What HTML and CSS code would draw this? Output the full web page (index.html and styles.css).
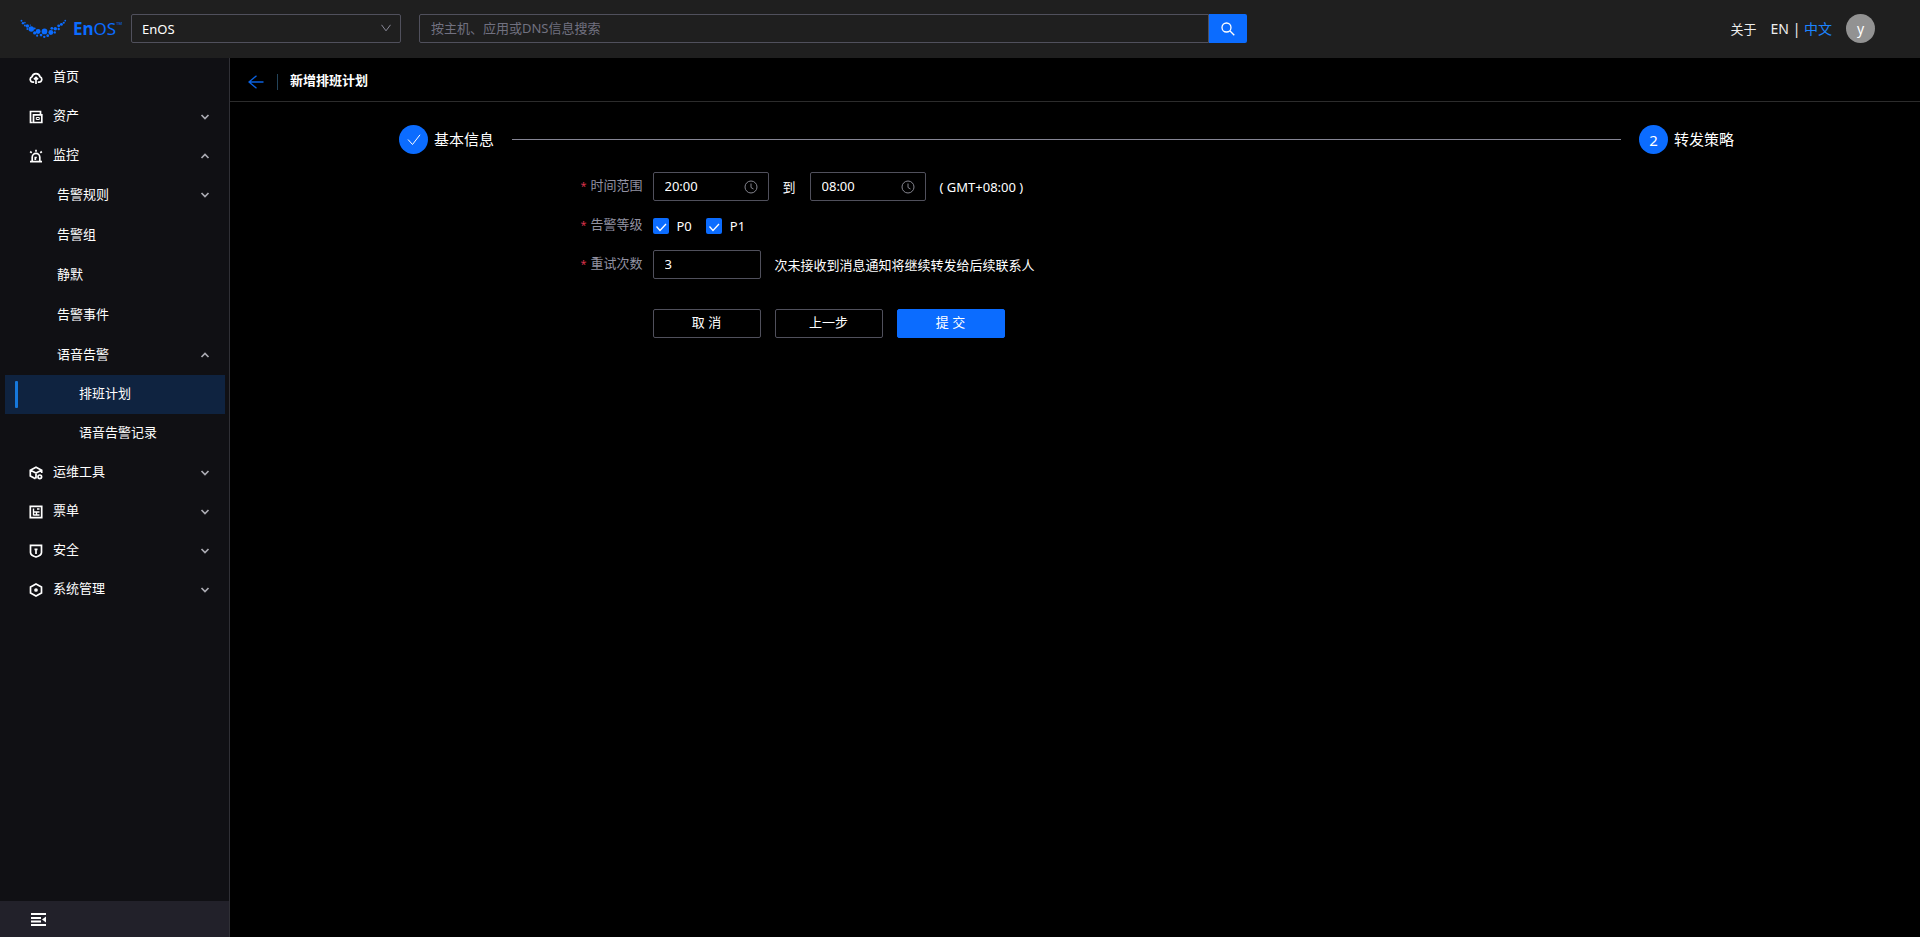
FILE: index.html
```html
<!DOCTYPE html>
<html lang="zh-CN">
<head>
<meta charset="utf-8">
<title>新增排班计划 - EnOS</title>
<link rel="stylesheet" href="styles.css">
</head>
<body>
<header class="topbar">
  <a class="logo" href="#" aria-label="EnOS">
    <svg class="logo-mark" viewBox="0 0 48 20" aria-hidden="true">
      <circle cx="1.500" cy="1.500" r="1"/><circle cx="3" cy="4" r="1.200"/><circle cx="5" cy="3.500" r="0.8"/>
      <circle cx="5" cy="6.500" r="1"/><circle cx="7.500" cy="7" r="1.800"/><circle cx="7.500" cy="10" r="1"/>
      <circle cx="11.500" cy="10" r="2.800"/><circle cx="10.500" cy="6" r="0.7"/><circle cx="15" cy="9.500" r="1"/><circle cx="15" cy="14" r="1.700"/>
      <circle cx="18.500" cy="12.500" r="2.500"/><circle cx="17.500" cy="16.800" r="1.100"/><circle cx="21.500" cy="16.200" r="1.400"/>
      <circle cx="25" cy="12.500" r="2.900"/><circle cx="24.800" cy="18" r="1.200"/><circle cx="28.300" cy="16.800" r="1.400"/>
      <circle cx="31.500" cy="13.500" r="2.500"/><circle cx="32.500" cy="9.300" r="1.400"/><circle cx="35.500" cy="13.500" r="1.200"/>
      <circle cx="36" cy="9.800" r="1.800"/><circle cx="39.500" cy="10" r="1.200"/><circle cx="39.500" cy="6.800" r="1.500"/>
      <circle cx="42.300" cy="5.300" r="1.500"/><circle cx="44.700" cy="3.600" r="1.100"/><circle cx="46.200" cy="1.500" r="0.9"/>
    </svg>
    <span class="logo-text"><b>En</b>OS<sup>TM</sup></span>
  </a>
  <div class="org">
    <select class="field org-select" aria-label="组织"><option>EnOS</option></select>
    <svg class="org-arrow" viewBox="0 0 10 8" aria-hidden="true"><path d="M.5.8 5 6.800 9.500.8"/></svg>
  </div>
  <form class="search">
    <input class="field search-input" type="text" placeholder="按主机、应用或DNS信息搜索" aria-label="搜索">
    <button class="search-btn" type="button" aria-label="搜索">
      <svg viewBox="0 0 14 14" aria-hidden="true"><circle cx="5.500" cy="5.500" r="4.500"/><path d="m8.800 8.800 4.500 4.500"/></svg>
    </button>
  </form>
  <div class="tools">
    <a class="about" href="#">关于</a>
    <span class="lang"><a href="#">EN</a> | <a class="current" href="#">中文</a></span>
    <button class="avatar" type="button">y</button>
  </div>
</header>
<div class="shell">
  <aside class="sidebar">
    <nav class="menu" aria-label="主菜单">
      <a class="item" href="#"><svg class="icon" viewBox="0 0 14 14"><path d="M5.200 11.200H4A2.800 2.800 0 0 1 3 5.800a4.100 4.100 0 0 1 8 0 2.800 2.800 0 0 1-1 5.400H8.800M7 13V6.800M4.900 8.300 7 6.300l2.100 2"/></svg><span>首页</span></a>
      <button class="item" type="button"><svg class="icon" viewBox="0 0 14 14"><path d="M3.500 12.500H1.500v-11h10V4M4.500 4.800h8.300v7.700H4.500z"/><path d="M7.300 7.500h3v2h-3z" stroke-width="1"/></svg><span>资产</span><svg class="chev" viewBox="0 0 10 6"><path d="m1.500 1 3.500 3.500L8.500 1"/></svg></button>
      <button class="item" type="button" aria-expanded="true"><svg class="icon" viewBox="0 0 14 14"><path d="M1 12.700h12M3.200 12.500V8.200a3.800 3.800 0 0 1 7.600 0v4.300M7 .8v2M1.200 2.500l1.500 1.300M12.800 2.500l-1.500 1.300M6.300 11V8.500h1.500"/></svg><span>监控</span><svg class="chev up" viewBox="0 0 10 6"><path d="m1.500 1 3.500 3.500L8.500 1"/></svg></button>
      <button class="item sub" type="button"><span>告警规则</span><svg class="chev" viewBox="0 0 10 6"><path d="m1.500 1 3.500 3.500L8.500 1"/></svg></button>
      <a class="item sub" href="#"><span>告警组</span></a>
      <a class="item sub" href="#"><span>静默</span></a>
      <a class="item sub" href="#"><span>告警事件</span></a>
      <button class="item sub" type="button" aria-expanded="true"><span>语音告警</span><svg class="chev up" viewBox="0 0 10 6"><path d="m1.500 1 3.500 3.500L8.500 1"/></svg></button>
      <a class="item leaf active" href="#" aria-current="page"><span>排班计划</span></a>
      <a class="item leaf" href="#"><span>语音告警记录</span></a>
      <button class="item" type="button"><svg class="icon" viewBox="0 0 14 14"><path d="M6.500 12.800 1.300 10V4.200L7 1.300l5.700 2.900V7M1.500 4.300 7 7l5.500-2.700M7 7v5.500"/><circle cx="10.800" cy="10.800" r="1.800"/></svg><span>运维工具</span><svg class="chev" viewBox="0 0 10 6"><path d="m1.500 1 3.500 3.500L8.500 1"/></svg></button>
      <button class="item" type="button"><svg class="icon" viewBox="0 0 14 14"><path d="M1.300 1.300h11.400v11.400H1.300z"/><path d="M4.500 3.500v7M4.500 7h6M4.500 10h6M7.500 7v3.500M8 4h2.500" stroke-width="1.400"/></svg><span>票单</span><svg class="chev" viewBox="0 0 10 6"><path d="m1.500 1 3.500 3.500L8.500 1"/></svg></button>
      <button class="item" type="button"><svg class="icon" viewBox="0 0 14 14"><path d="M1.500 1.300h11v7.200c0 2-2.500 3.700-5.500 4.500-3-.8-5.500-2.500-5.500-4.500zM7 5v5M5.500 5.300h3"/></svg><span>安全</span><svg class="chev" viewBox="0 0 10 6"><path d="m1.500 1 3.500 3.500L8.500 1"/></svg></button>
      <button class="item" type="button"><svg class="icon" viewBox="0 0 14 14"><path d="m7 1 5.500 3v6L7 13l-5.500-3V4z"/><circle cx="7" cy="7" r="1"/></svg><span>系统管理</span><svg class="chev" viewBox="0 0 10 6"><path d="m1.500 1 3.500 3.500L8.500 1"/></svg></button>
    </nav>
    <button class="collapse" type="button" aria-label="收起菜单">
      <svg viewBox="0 0 15 13" aria-hidden="true"><path d="M0 0h15v2H0zM0 4h10v2H0zM0 7.500h10v2H0zM0 11h15v2H0zM15 3.500v6L11 6.500z"/></svg>
    </button>
  </aside>
  <main class="content">
    <div class="page-head">
      <a class="back" href="#" aria-label="返回"><svg viewBox="0 0 16 14" aria-hidden="true"><path d="M15.500 7H1M8.500.8 1 7l7.500 6.200"/></svg></a>
      <h1>新增排班计划</h1>
    </div>
    <ol class="steps">
      <li class="step"><span class="dot"><svg viewBox="0 0 14 12" aria-hidden="true"><path d="m1 5.500 4.500 5L13 .8"/></svg></span><span class="step-name">基本信息</span></li>
      <li class="rail" aria-hidden="true"></li>
      <li class="step"><span class="dot">2</span><span class="step-name">转发策略</span></li>
    </ol>
    <form class="form">
      <div class="row">
        <label class="label" for="from">时间范围</label>
        <div class="controls">
          <span class="time"><input class="field" id="from" type="text" value="20:00"><svg viewBox="0 0 14 14" aria-hidden="true"><circle cx="7" cy="7" r="6"/><path d="M7 3.500V7.500l2.500 1.500"/></svg></span>
          <label for="to">到</label>
          <span class="time"><input class="field" id="to" type="text" value="08:00"><svg viewBox="0 0 14 14" aria-hidden="true"><circle cx="7" cy="7" r="6"/><path d="M7 3.500V7.500l2.500 1.500"/></svg></span>
          <span>( GMT+08:00 )</span>
        </div>
      </div>
      <div class="row">
        <span class="label" id="level">告警等级</span>
        <div class="controls" role="group" aria-labelledby="level">
          <label class="check"><input type="checkbox" checked><svg viewBox="0 0 16 16" aria-hidden="true"><path d="m3.500 8.500 3.500 4 6-6.500"/></svg>P0</label>
          <label class="check"><input type="checkbox" checked><svg viewBox="0 0 16 16" aria-hidden="true"><path d="m3.500 8.500 3.500 4 6-6.500"/></svg>P1</label>
        </div>
      </div>
      <div class="row">
        <label class="label" for="retry">重试次数</label>
        <div class="controls">
          <input class="field retry" id="retry" type="text" value="3">
          <span>次未接收到消息通知将继续转发给后续联系人</span>
        </div>
      </div>
      <div class="row actions">
        <div class="controls">
          <button class="btn" type="button">取 消</button>
          <button class="btn" type="button">上一步</button>
          <button class="btn primary" type="button">提 交</button>
        </div>
      </div>
    </form>
  </main>
</div>
</body>
</html>
```
FILE: styles.css
```css
* { box-sizing: border-box; }
body {
  margin: 0;
  min-height: 100vh;
  display: flex;
  flex-direction: column;
  background: #000;
  color: #fff;
  font: 13px/20px "Noto Sans", "Noto Sans CJK SC", sans-serif;
}
a { color: inherit; text-decoration: none; }
button, input, select { font: inherit; color: inherit; }
button { padding: 0; border: 0; background: none; cursor: pointer; }
svg { display: block; fill: none; stroke: currentColor; }

.field {
  height: 29px;
  padding: 0 11px 2px;
  border: 1px solid #50505c;
  border-radius: 2px;
  background: transparent;
  outline: none;
}

.topbar {
  display: flex;
  align-items: center;
  height: 58px;
  padding: 0 45px 1px 20px;
  background: #1f1f1f;
}
.logo {
  display: flex;
  align-items: center;
  gap: 6px;
  width: 111px;
  color: #0b6cff;
}
.logo-mark { flex: none; width: 47px; height: 20px; fill: currentColor; stroke: none; }
.logo-text { display: flex; font: 400 17px/20px "Noto Sans", sans-serif; }
.logo-text b { font-weight: 700; }
.logo-text sup { font-size: 4px; line-height: 10px; }
.org { position: relative; width: 270px; margin-right: 18px; }
.org-select { width: 100%; padding: 0 10px; appearance: none; }
.org-arrow {
  position: absolute;
  top: 10px;
  right: 10px;
  width: 10px;
  height: 8px;
  color: #8a8a99;
  pointer-events: none;
}
.search { display: flex; flex: 0 1 828px; }
.search-input { flex: 1; min-width: 0; border-radius: 2px 0 0 2px; }
.search-input::placeholder { color: #717180; }
.search-btn {
  display: flex;
  justify-content: center;
  align-items: center;
  width: 38px;
  height: 29px;
  border-radius: 0 2px 2px 0;
  background: #0b6cff;
}
.search-btn svg { width: 14px; height: 14px; stroke-width: 1.3; }
.tools { display: flex; align-items: center; margin-left: auto; color: #eee; }
.about { margin-right: 14px; }
.lang { margin-right: 14px; font-size: 14px; }
.current { color: #1c84ff; }
.avatar {
  width: 29px;
  height: 29px;
  border-radius: 50%;
  background: #929292;
  color: #fff;
  font-size: 14px;
}

.shell { display: flex; flex: 1; }
.sidebar {
  display: flex;
  flex-direction: column;
  flex: 0 0 230px;
  border-right: 1px solid #303036;
  background: #101014;
}
.menu { display: flex; flex-direction: column; flex: 1; }
.item {
  position: relative;
  display: flex;
  align-items: center;
  height: 39px;
  margin: 0 4px 0 5px;
  padding: 0 15px 0 24px;
  text-align: left;
}
.item span { padding-bottom: 3px; }
.icon { width: 14px; height: 14px; margin-right: 10px; stroke-width: 1.7; }
.sub { height: 40px; padding-left: 52px; }
.leaf { padding-left: 74px; }
.active { background: #0f2340; }
.active::before {
  content: "";
  position: absolute;
  top: 6px;
  bottom: 6px;
  left: 10px;
  width: 3px;
  border-radius: 1px;
  background: #1678dc;
}
.chev { width: 10px; height: 6px; margin-left: auto; color: #aaaab2; stroke-width: 1.7; }
.up { transform: rotate(180deg); }
.collapse { height: 36px; padding-left: 31px; background: #22212a; }
.collapse svg { width: 15px; height: 13px; fill: currentColor; stroke: none; }

.content { flex: 1; min-width: 0; }
.page-head {
  display: flex;
  align-items: center;
  height: 44px;
  padding: 0 18px;
  border-bottom: 1px solid #2c2c2c;
}
.back { margin-top: 4px; padding-right: 13px; border-right: 1px solid #24445a; color: #0b62e0; }
.back svg { width: 16px; height: 16px; stroke-width: 1.3; }
.page-head h1 { margin: 0 0 0 12px; font-size: 13px; line-height: 20px; }

.steps {
  display: flex;
  align-items: center;
  gap: 18px;
  margin: 23px 0 18px;
  padding: 0 calc(10% + 17px) 0 10%;
  list-style: none;
  font-size: 15px;
}
.step { display: flex; align-items: center; gap: 6px; }
.step-name { padding-bottom: 2px; }
.dot {
  display: flex;
  justify-content: center;
  align-items: center;
  width: 29px;
  height: 29px;
  border-radius: 50%;
  background: #0b6cff;
}
.dot svg { width: 14px; height: 12px; }
.rail { flex: 1; height: 1px; background: #858594; }

.form { display: flex; flex-direction: column; gap: 10px; }
.row { display: grid; grid-template-columns: 25% 1fr; align-items: center; }
.label { padding: 0 10px 3px 0; text-align: right; color: #9292a2; }
.label::before { content: "*"; margin-right: 4px; color: #d9304a; font-size: 11px; }
.controls { display: flex; align-items: center; gap: 14px; grid-column: 2; min-height: 29px; }
.time { position: relative; width: 116px; }
.time .field { width: 100%; }
.time svg { position: absolute; top: 8px; right: 11px; width: 14px; height: 14px; color: #85858f; }
.check { position: relative; display: flex; align-items: center; gap: 8px; }
.check input { appearance: none; width: 16px; height: 16px; margin: 0; border-radius: 2px; background: #26262c; }
.check input:checked { background: #0b6cff; }
.check svg { position: absolute; left: 0; width: 16px; height: 16px; stroke-width: 1.3; pointer-events: none; }
.retry { width: 108px; }
.actions { margin-top: 20px; }
.btn { width: 108px; height: 29px; padding-bottom: 3px; border: 1px solid #50505c; border-radius: 2px; }
.primary { border-color: #0b6cff; background: #0b6cff; }
```
